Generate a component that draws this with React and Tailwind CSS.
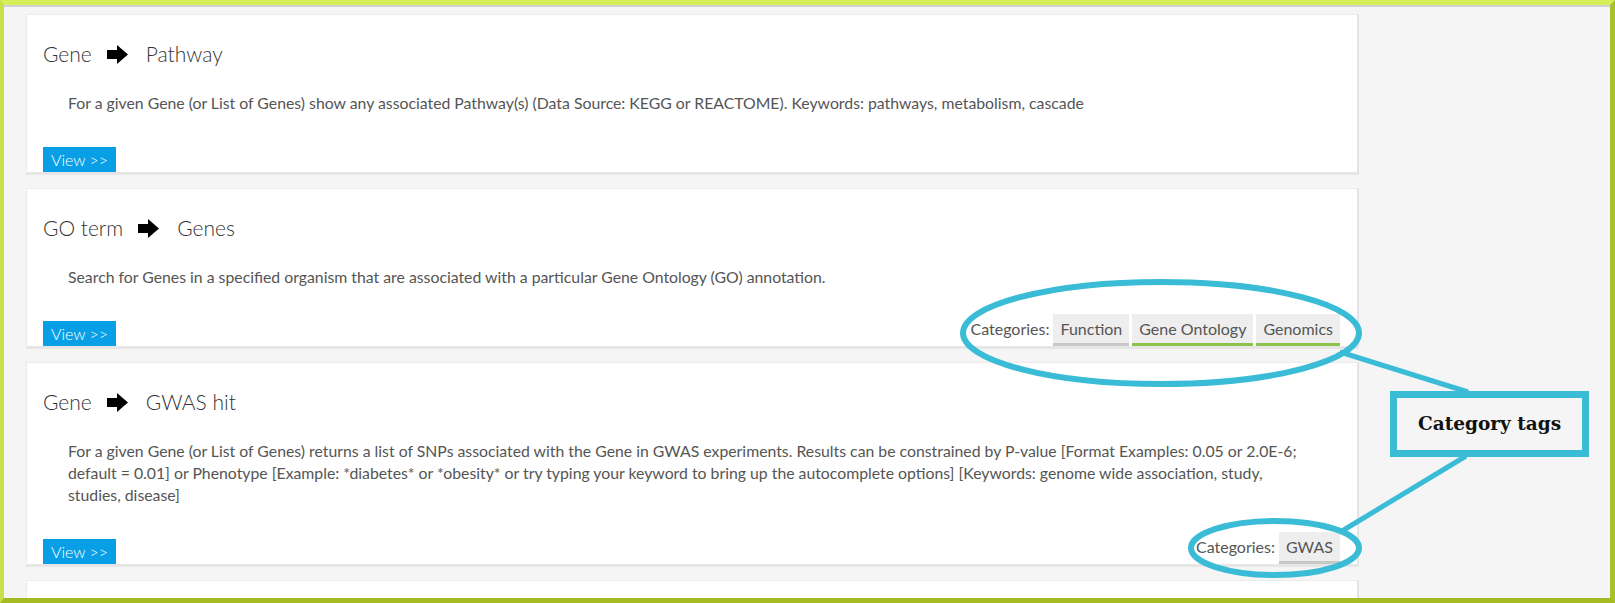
import React from 'react';

const Arrow = () => (
  <svg width="21" height="19" viewBox="0 0 21 19" className="shrink-0">
    <polygon points="0,5 10,5 10,0 21,9.5 10,19 10,14 0,14" fill="#000" />
  </svg>
);

const Tag = ({ label, green }) => (
  <span
    className={`h-[32px] px-[7px] bg-[#eeeeee] border-b-[3px] text-[16px] leading-[29px] text-[#555] whitespace-nowrap ${
      green ? 'border-[#8bc34a]' : 'border-[#c8c8c8]'
    }`}
  >
    {label}
  </span>
);

const ToolCard = ({ from, to, lines, tags }) => (
  <div className="w-[1333px] shrink-0 bg-white border border-[#ebebeb] border-r-2 border-b-[3px] border-r-[#e4e4e4] border-b-[#e6e6e6] pt-[27px] pl-4 pr-[17px]">
    <h3 className="flex items-center text-[21px] leading-[24px] font-light text-[#333]">
      <span>{from}</span>
      <span className="ml-[15px] mr-[18px]">
        <Arrow />
      </span>
      <span>{to}</span>
    </h3>
    <p className="mt-[26px] ml-[25px] text-[15.8px] leading-[22px] text-[#555]">
      {lines.map((line, i) => (
        <React.Fragment key={i}>
          {i > 0 && <br />}
          {line}
        </React.Fragment>
      ))}
    </p>
    <div className="mt-[33px] h-[25px] flex items-end justify-between">
      <button className="h-[25px] px-2 bg-[#089fe6] text-white text-[16px] leading-[25px] font-light">View &gt;&gt;</button>
      {tags && (
        <div className="flex items-end gap-[3px]">
          <span className="text-[16px] leading-[29px] mb-[3px] mr-[1px] text-[#555]">Categories:</span>
          {tags.map((t) => (
            <Tag key={t.label} label={t.label} green={t.green} />
          ))}
        </div>
      )}
    </div>
  </div>
);

const tools = [
  {
    from: 'Gene',
    to: 'Pathway',
    lines: [
      'For a given Gene (or List of Genes) show any associated Pathway(s) (Data Source: KEGG or REACTOME). Keywords: pathways, metabolism, cascade',
    ],
  },
  {
    from: 'GO term',
    to: 'Genes',
    lines: ['Search for Genes in a specified organism that are associated with a particular Gene Ontology (GO) annotation.'],
    tags: [
      { label: 'Function', green: false },
      { label: 'Gene Ontology', green: true },
      { label: 'Genomics', green: true },
    ],
  },
  {
    from: 'Gene',
    to: 'GWAS hit',
    lines: [
      'For a given Gene (or List of Genes) returns a list of SNPs associated with the Gene in GWAS experiments. Results can be constrained by P-value [Format Examples: 0.05 or 2.0E-6;',
      'default = 0.01] or Phenotype [Example: *diabetes* or *obesity* or try typing your keyword to bring up the autocomplete options] [Keywords: genome wide association, study,',
      'studies, disease]',
    ],
    tags: [{ label: 'GWAS', green: false }],
  },
];

export default function App() {
  return (
    <div className="relative w-[1615px] h-[603px] overflow-hidden font-['Lato',sans-serif]">
      <div className="h-full flex flex-col overflow-hidden bg-[#f5f5f5] border-t-[5px] border-l-4 border-r-[5px] border-b-[5px] border-t-[#d6ee57] border-l-[#c9e04a] border-r-[#a9c22b] border-b-[#a4ba21]">
        <div className="h-[2px] shrink-0 bg-[#d2d2d2]" />
        <div className="flex flex-col gap-[13px] pt-[7px] pl-[22px]">
          {tools.map((tool, i) => (
            <ToolCard key={i} {...tool} />
          ))}
          {/* next card, cut off by the frame */}
          <div className="w-[1333px] h-[120px] shrink-0 bg-white border border-[#ebebeb] border-r-2 border-r-[#e4e4e4]" />
        </div>
      </div>

      {/* annotation overlay */}
      <svg className="absolute left-0 top-0 pointer-events-none" width="1615" height="603">
        <ellipse cx="1161" cy="333" rx="198" ry="51" fill="none" stroke="#3bbcd6" strokeWidth="6" />
        <ellipse cx="1275" cy="548" rx="84" ry="27" fill="none" stroke="#3bbcd6" strokeWidth="6" />
        <line x1="1340" y1="352" x2="1468" y2="392" stroke="#3bbcd6" strokeWidth="5" />
        <line x1="1466" y1="456" x2="1342" y2="531" stroke="#3bbcd6" strokeWidth="5" />
      </svg>
      <div className="absolute left-[1390px] top-[391px] w-[199px] h-[66px] border-[7px] border-[#3bbcd6] bg-[#f5f5f5] flex items-center justify-center font-['DejaVu_Serif',serif] font-bold text-[18.5px] text-[#111]">
        Category tags
      </div>
    </div>
  );
}
